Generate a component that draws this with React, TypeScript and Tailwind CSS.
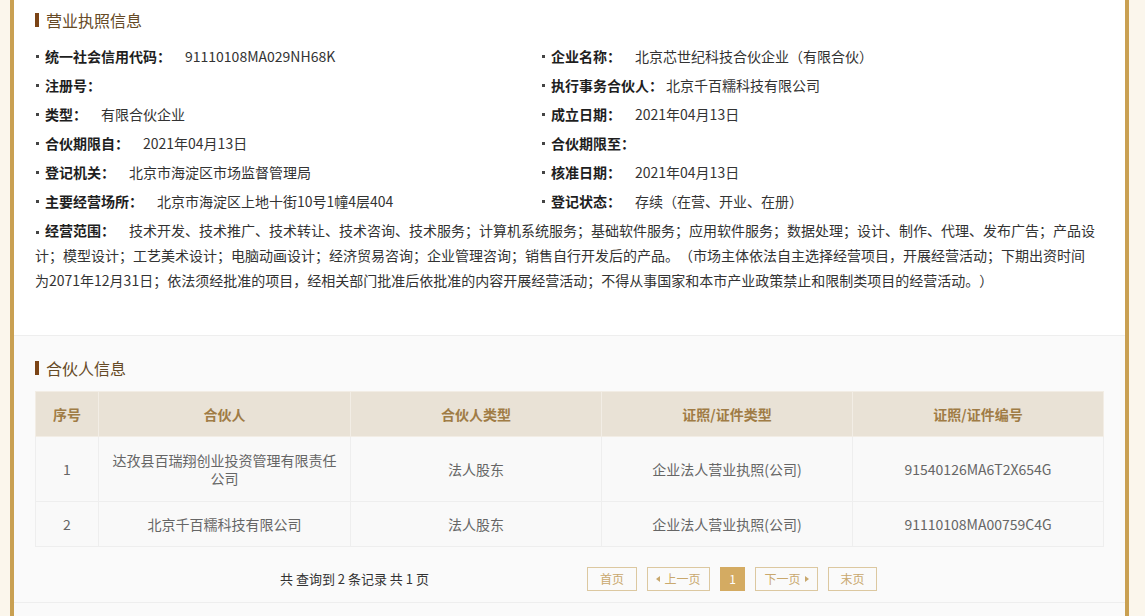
import React from "react";

const infoRows: [string, string, string, string][] = [
  ["统一社会信用代码：", "91110108MA029NH68K", "企业名称：", "北京芯世纪科技合伙企业（有限合伙）"],
  ["注册号：", "", "执行事务合伙人：", "北京千百糯科技有限公司"],
  ["类型：", "有限合伙企业", "成立日期：", "2021年04月13日"],
  ["合伙期限自：", "2021年04月13日", "合伙期限至：", ""],
  ["登记机关：", "北京市海淀区市场监督管理局", "核准日期：", "2021年04月13日"],
  ["主要经营场所：", "北京市海淀区上地十街10号1幢4层404", "登记状态：", "存续（在营、开业、在册）"],
];

const partners = [
  { no: "1", name: "达孜县百瑞翔创业投资管理有限责任公司", type: "法人股东", certType: "企业法人营业执照(公司)", certNo: "91540126MA6T2X654G", tall: true },
  { no: "2", name: "北京千百糯科技有限公司", type: "法人股东", certType: "企业法人营业执照(公司)", certNo: "91110108MA00759C4G", tall: false },
];

const scope =
  "技术开发、技术推广、技术转让、技术咨询、技术服务；计算机系统服务；基础软件服务；应用软件服务；数据处理；设计、制作、代理、发布广告；产品设计；模型设计；工艺美术设计；电脑动画设计；经济贸易咨询；企业管理咨询；销售自行开发后的产品。（市场主体依法自主选择经营项目，开展经营活动；下期出资时间为2071年12月31日；依法须经批准的项目，经相关部门批准后依批准的内容开展经营活动；不得从事国家和本市产业政策禁止和限制类项目的经营活动。）";

function Field({ label, value }: { label: string; value: string }) {
  // 执行事务合伙人 sits tighter against its value in the original
  const gap = label.length > 7 && label !== "统一社会信用代码：" ? "ml-[3px]" : "ml-[14px]";
  return (
    <div className="flex items-center h-[29px] leading-[29px] text-[14px]">
      <span className="w-[10px] flex items-center">
        <span className="ml-[1px] w-[3px] h-[3px] bg-[#444]" />
      </span>
      <span className="font-bold text-[#1e1e1e]">{label}</span>
      {value && <span className={`${gap} text-[#333]`}>{value}</span>}
    </div>
  );
}

function SectionTitle({ text }: { text: string }) {
  return (
    <div className="flex items-center h-[20px]">
      <span className="w-[4px] h-[14px] bg-[#7b4416]" />
      <span className="ml-[7px] text-[16px] leading-[20px] text-[#664a26]">{text}</span>
    </div>
  );
}

function Triangle({ dir }: { dir: "left" | "right" }) {
  return (
    <svg width="4" height="6" viewBox="0 0 4 6" className="inline-block">
      {dir === "left" ? <path d="M4 0 L0 3 L4 6 Z" fill="#c9a86d" /> : <path d="M0 0 L4 3 L0 6 Z" fill="#c9a86d" />}
    </svg>
  );
}

export default function App() {
  return (
    <div className="w-[1145px] h-[616px] overflow-hidden bg-[#fbf6ec] font-['Noto_Sans_CJK_SC',sans-serif] [text-spacing-trim:space-all]">
      <div className="ml-[10px] w-[1119px] h-full border-x-4 border-[#c9a052] flex flex-col bg-white">
        {/* 营业执照信息 */}
        <section className="bg-white pt-[10px] pb-[42px] pl-[21px] pr-[22px] border-b border-[#eeeeee]">
          <SectionTitle text="营业执照信息" />
          <div className="mt-[12px] grid grid-cols-[506px_1fr]">
            {infoRows.map((r, i) => (
              <React.Fragment key={i}>
                <Field label={r[0]} value={r[1]} />
                <Field label={r[2]} value={r[3]} />
              </React.Fragment>
            ))}
          </div>
          <p className="mt-[2px] w-[1062px] text-[14px] leading-[25px] text-[#333]">
            <span className="inline-block w-[10px] align-middle">
              <span className="block ml-[1px] w-[3px] h-[3px] bg-[#444]" />
            </span>
            <span className="font-bold text-[#1e1e1e]">经营范围：</span>
            <span className="ml-[14px]">{scope}</span>
          </p>
        </section>

        {/* 合伙人信息 */}
        <section className="flex-1 bg-[#fafafa] pt-[22px] pl-[21px] pr-[22px]">
          <SectionTitle text="合伙人信息" />
          <table className="mt-[13px] w-[1068px] table-fixed border-collapse text-[14px] text-center">
            <colgroup>
              <col className="w-[63px]" />
              <col className="w-[252px]" />
              <col className="w-[251px]" />
              <col className="w-[251px]" />
              <col className="w-[251px]" />
            </colgroup>
            <thead>
              <tr className="h-[45px] bg-[#e9e2d6] text-[#a07c45] font-bold">
                <th className="border border-[#f2ede5]">序号</th>
                <th className="border border-[#f2ede5]">合伙人</th>
                <th className="border border-[#f2ede5]">合伙人类型</th>
                <th className="border border-[#f2ede5]">证照/证件类型</th>
                <th className="border border-[#f2ede5]">证照/证件编号</th>
              </tr>
            </thead>
            <tbody className="text-[#666] bg-[#f9f9f9]">
              {partners.map((p) => (
                <tr key={p.no} className={p.tall ? "h-[65px]" : "h-[45px]"}>
                  <td className="border border-[#eeeeee]">{p.no}</td>
                  <td className="border border-[#eeeeee] px-[10px] leading-[18px]">{p.name}</td>
                  <td className="border border-[#eeeeee]">{p.type}</td>
                  <td className="border border-[#eeeeee]">{p.certType}</td>
                  <td className="border border-[#eeeeee]">{p.certNo}</td>
                </tr>
              ))}
            </tbody>
          </table>

          <div className="mt-[20px] flex items-center h-[24px]">
            <div className="ml-[245px] w-[307px] text-[13px] text-[#333]">共 查询到 2 条记录 共 1 页</div>
            <div className="flex items-center gap-[10px] text-[12px] text-[#c9a86d]">
              <span className="w-[50px] h-[24px] flex items-center justify-center border border-[#dcc8a0]">首页</span>
              <span className="w-[63px] h-[24px] flex items-center justify-center gap-[4px] border border-[#dcc8a0]">
                <Triangle dir="left" />
                上一页
              </span>
              <span className="w-[25px] h-[24px] flex items-center justify-center bg-[#d4ab62] text-white">1</span>
              <span className="w-[63px] h-[24px] flex items-center justify-center gap-[4px] border border-[#dcc8a0]">
                下一页
                <Triangle dir="right" />
              </span>
              <span className="w-[49px] h-[24px] flex items-center justify-center border border-[#dcc8a0]">末页</span>
            </div>
          </div>
          <div className="mt-[11px] -ml-[21px] -mr-[22px] border-b border-[#eeeeee]" />
        </section>
      </div>
    </div>
  );
}
